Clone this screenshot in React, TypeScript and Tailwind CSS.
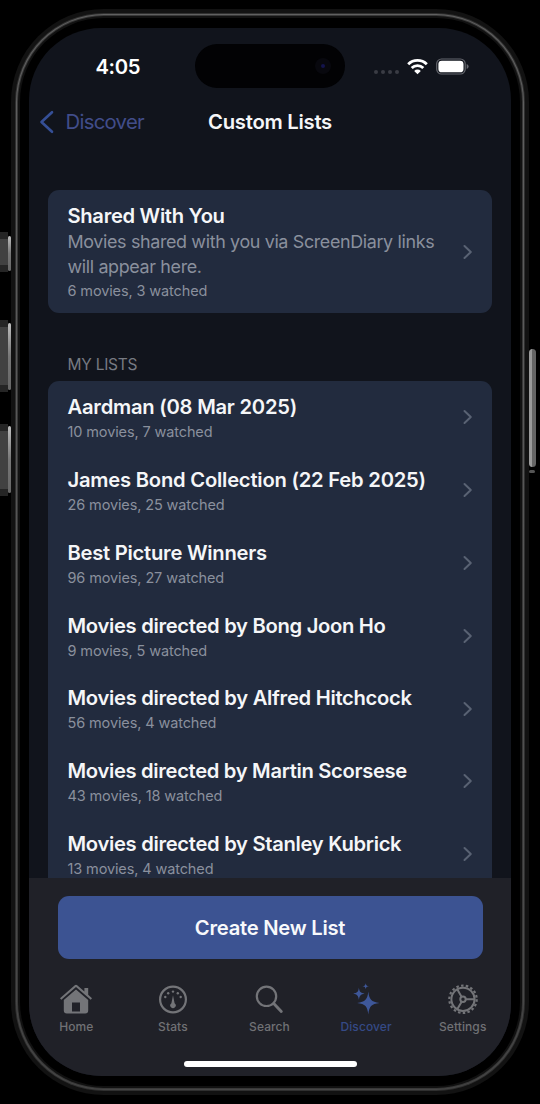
import type { ReactNode } from "react";

const lists = [
  { title: "Aardman (08 Mar 2025)", detail: "10 movies, 7 watched", tracking: "tracking-[-0.24px]" },
  { title: "James Bond Collection (22 Feb 2025)", detail: "26 movies, 25 watched", tracking: "tracking-[-0.22px]" },
  { title: "Best Picture Winners", detail: "96 movies, 27 watched", tracking: "tracking-[-0.25px]" },
  { title: "Movies directed by Bong Joon Ho", detail: "9 movies, 5 watched", tracking: "tracking-[-0.3px]" },
  { title: "Movies directed by Alfred Hitchcock", detail: "56 movies, 4 watched", tracking: "tracking-[-0.29px]" },
  { title: "Movies directed by Martin Scorsese", detail: "43 movies, 18 watched", tracking: "tracking-[-0.32px]" },
  { title: "Movies directed by Stanley Kubrick", detail: "13 movies, 4 watched", tracking: "tracking-[-0.3px]" },
];

function Chevron() {
  return (
    <svg width="10" height="16" viewBox="0 0 10 16" fill="none" stroke="#596273" strokeWidth="2" strokeLinecap="round" strokeLinejoin="round" className="shrink-0">
      <path d="M1.500 2 7.800 8 1.500 14" />
    </svg>
  );
}

function HomeIcon() {
  return (
    <svg width="34" height="32" viewBox="0 0 34 32" fill="#737478">
      <path d="M1 15.200 15.800 2.300q1.200-1 2.400 0L25.400 8.500V5h3.800v6.800L33 15.200l-1.300 1.500L17 4.100 2.300 16.700Z" />
      <path fillRule="evenodd" d="M17 6.400 29.200 17V27.500q0 3-3 3H7.800q-3 0-3-3V17Zm-4 13.200v8.800h8v-8.800Z" />
    </svg>
  );
}

function StatsIcon() {
  return (
    <svg width="30" height="30" viewBox="0 0 30 30" fill="#737478">
      <circle cx="15" cy="15.500" r="12.900" fill="none" stroke="#737478" strokeWidth="2.200" />
      <path d="m15 11.200 1.600 8a2.700 2.700 0 1 1-3.200 0Z" />
      <circle cx="7.300" cy="13" r="1.200" />
      <circle cx="10.200" cy="9.300" r="1.200" />
      <circle cx="15" cy="7.600" r="1.200" />
      <circle cx="19.800" cy="9.300" r="1.200" />
      <circle cx="22.700" cy="13" r="1.200" />
    </svg>
  );
}

function SearchIcon() {
  return (
    <svg width="30" height="30" viewBox="0 0 30 30" fill="none" stroke="#737478" strokeLinecap="round">
      <circle cx="12.500" cy="12.300" r="9.700" strokeWidth="2.200" />
      <path d="m19.700 19.500 7.600 7.900" strokeWidth="2.900" />
    </svg>
  );
}

function DiscoverIcon() {
  return (
    <svg width="28" height="32" viewBox="0 0 28 32" fill="#3e5799">
      <path d="M16.300 8.600c.9 7.900 2.900 10.400 11.200 11.400-8.300 1-10.300 3.500-11.200 11.400C15.400 23.500 13.400 21 5.100 20c8.300-1 10.300-3.500 11.200-11.400Z" />
      <path d="M6.900 4.600c.5 4.200 1.700 5.600 5.700 6.100-4 .5-5.200 1.900-5.700 6.100-.5-4.200-1.700-5.600-5.700-6.100 4-.5 5.200-1.900 5.700-6.100Z" />
      <path d="M13.700.200c.3 2 1 2.700 3.300 3-2.300.3-3 1-3.300 3-.3-2-1-2.700-3.300-3 2.300-.3 3-1 3.300-3Z" />
    </svg>
  );
}

function SettingsIcon() {
  return (
    <svg width="32" height="32" viewBox="0 0 32 32" fill="none" stroke="#737478" strokeWidth="2">
      <circle cx="16" cy="16.300" r="11.600" />
      <circle cx="16" cy="16.300" r="13.700" strokeWidth="2.200" strokeDasharray="2.500 2.282" />
      <circle cx="16" cy="16.300" r="2.700" />
      <path d="M18.700 16.300h9M14.650 13.960 10.100 6.100M14.650 18.640l-4.550 7.860" />
    </svg>
  );
}

function Tab({ label, icon, active }: { label: string; icon: ReactNode; active?: boolean }) {
  return (
    <div className={`flex w-[96.600px] shrink-0 flex-col items-center ${active ? "text-[#354a86]" : "text-[#707175]"}`}>
      <div className="flex h-8 items-center justify-center">{icon}</div>
      <span className="mt-1 text-[12px] leading-4 font-medium tracking-[0.100px]">{label}</span>
    </div>
  );
}

function StatusBar() {
  return (
    <div className="flex h-[72px] shrink-0 items-start pt-4">
      <span className="mt-[9px] ml-[66.500px] w-[100.500px] text-[20.300px] leading-7 font-semibold tracking-[-0.400px] text-white">4:05</span>
      <div className="-ml-px flex h-11 w-[150px] items-center justify-end rounded-full bg-[#020204] pr-[14px]">
        <div className="flex size-[16px] items-center justify-center rounded-full bg-[#08080e]">
          <div className="size-1 rounded-full bg-[#14144c]" />
        </div>
      </div>
      <div className="mt-[26px] ml-[29px] flex gap-[3px]">
        <i className="size-1 rounded-full bg-[#3a3c44]" />
        <i className="size-1 rounded-full bg-[#3a3c44]" />
        <i className="size-1 rounded-full bg-[#3a3c44]" />
        <i className="size-1 rounded-full bg-[#3a3c44]" />
      </div>
      <svg className="mt-[14px] ml-[7.500px]" width="21" height="17" viewBox="0 0 21 17" fill="none" stroke="#fff" strokeWidth="2.900">
        <path d="M1.200 6.200a13.300 13.300 0 0 1 18.600 0" />
        <path d="M4.700 10a8.300 8.300 0 0 1 11.600 0" />
        <path d="M10.500 16.200 7.200 12.900a4.700 4.700 0 0 1 6.600 0Z" fill="#fff" stroke="none" />
      </svg>
      <svg className="mt-[14px] ml-[8px]" width="34" height="17" viewBox="0 0 34 17">
        <rect x="0.700" y="1" width="28.500" height="15" rx="4.800" fill="none" stroke="#65676e" strokeWidth="1.200" />
        <rect x="2.400" y="2.700" width="25.100" height="11.600" rx="3.400" fill="#fff" />
        <path d="M30.700 6v4.900q1.900-.7 1.900-2.450T30.700 6Z" fill="#65676e" />
      </svg>
    </div>
  );
}

export default function App() {
  return (
    <div className="relative h-[1104px] w-[540px] overflow-hidden bg-black pt-[9px] font-[Inter,sans-serif]">
      <div className="mx-auto h-[1086px] w-[518px] rounded-[93px] bg-[#121212] p-1">
        <div className="h-full rounded-[89px] bg-[#303030] p-px">
          <div className="h-full rounded-[88px] bg-linear-to-b from-[#606060] via-[#555555] to-[#454545] p-px">
            <div className="h-full rounded-[87px] bg-[#383838] p-px">
              <div className="h-full rounded-[86px] bg-[#111111] p-[2px]">
                <div className="h-full rounded-[84px] bg-black px-[9px] py-[10px]">
                  <div className="flex h-[1048px] flex-col overflow-hidden rounded-[72px] bg-[#11141c]">
                    <StatusBar />
                    <div className="grid h-[44px] shrink-0 grid-cols-[179px_1fr] items-center">
                      <div className="flex items-center pl-[10px] text-[#414d8a]">
                        <svg width="16" height="24" viewBox="0 0 16 24" fill="none" stroke="#354f96" strokeWidth="2.600" strokeLinecap="round" strokeLinejoin="round">
                          <path d="M13 2.200 2.500 12 13 21.800" />
                        </svg>
                        <span className="ml-[10.500px] text-[20.300px] leading-7 tracking-[-0.700px]">Discover</span>
                      </div>
                      <span className="text-[20.300px] leading-7 font-semibold tracking-[-0.270px] text-[#f5f6f8]">Custom Lists</span>
                    </div>

                    <div className="mt-[46px] flex h-[123px] w-[444px] shrink-0 items-center self-center rounded-[11px] bg-[#222b3e] pr-[19.500px] pl-[19.500px]">
                      <div className="flex-1 whitespace-nowrap text-[#8a909d]">
                        <h2 className="text-[20.200px] leading-[29px] font-semibold tracking-[-0.310px] text-[#f5f6f8]">Shared With You</h2>
                        <p className="text-[17.900px] leading-[24.500px] whitespace-pre tracking-[-0.350px]">{"Movies shared with you via ScreenDiary links\nwill appear here."}</p>
                        <p className="text-[14.500px] leading-[23px] tracking-[-0.120px]">6 movies, 3 watched</p>
                      </div>
                      <Chevron />
                    </div>

                    <h3 className="mt-[42px] ml-[38.500px] h-[26px] shrink-0 text-[15.500px] leading-5 tracking-[-0.250px] text-[#777a82]">MY LISTS</h3>

                    <div className="flex h-[497px] w-[444px] shrink-0 flex-col self-center overflow-hidden rounded-t-[11px] bg-[#222b3e] px-[19.500px]">
                      {lists.map((item) => (
                        <div key={item.title} className="flex h-[72.800px] shrink-0 items-center">
                          <div className="flex-1 pt-[2px] whitespace-nowrap">
                            <h2 className={`text-[20.200px] leading-7 font-semibold text-[#f5f6f8] ${item.tracking}`}>{item.title}</h2>
                            <p className="text-[14.500px] leading-[22.500px] tracking-[-0.120px] text-[#8a909d]">{item.detail}</p>
                          </div>
                          <Chevron />
                        </div>
                      ))}
                    </div>

                    <div className="flex flex-1 flex-col bg-[#202128] pt-[18px]">
                      <button className="h-[63px] w-[425px] shrink-0 self-center rounded-[11px] bg-[#3c5392] pt-[2px] text-[20.200px] font-semibold tracking-[-0.250px] text-[#f8f9fb]">Create New List</button>
                      <nav className="mt-6 -ml-px flex">
                        <Tab label="Home" icon={<HomeIcon />} />
                        <Tab label="Stats" icon={<StatsIcon />} />
                        <Tab label="Search" icon={<SearchIcon />} />
                        <Tab label="Discover" icon={<DiscoverIcon />} active />
                        <Tab label="Settings" icon={<SettingsIcon />} />
                      </nav>
                      <div className="mt-[26px] h-[6px] w-[173px] self-center rounded-full bg-white" />
                    </div>
                  </div>
                </div>
              </div>
            </div>
          </div>
        </div>
      </div>

      <div className="absolute top-[232px] left-0 h-[40px] w-[8px] border-y-[7px] border-[#252525] bg-[#414141]" />
      <div className="absolute top-[236px] left-[8px] h-[35px] w-[3px] rounded bg-linear-to-b from-[#c0c0c0] via-[#777777] to-[#666666]" />
      <div className="absolute top-[320px] left-0 h-[72px] w-[8px] border-y-[7px] border-[#252525] bg-[#414141]" />
      <div className="absolute top-[323px] left-[8px] h-[67px] w-[3px] rounded bg-linear-to-b from-[#c0c0c0] via-[#777777] to-[#666666]" />
      <div className="absolute top-[424px] left-0 h-[72px] w-[8px] border-y-[7px] border-[#252525] bg-[#414141]" />
      <div className="absolute top-[426px] left-[8px] h-[67px] w-[3px] rounded bg-linear-to-b from-[#c0c0c0] via-[#777777] to-[#666666]" />
      <div className="absolute top-[349px] left-[529px] h-[118px] w-[7px] rounded-sm border-l-[3px] border-[#9a9a9a] bg-[#656565]" />
      <div className="absolute top-[470px] left-[529px] h-[3px] w-[6px] rounded-full bg-[#555555]" />
    </div>
  );
}
